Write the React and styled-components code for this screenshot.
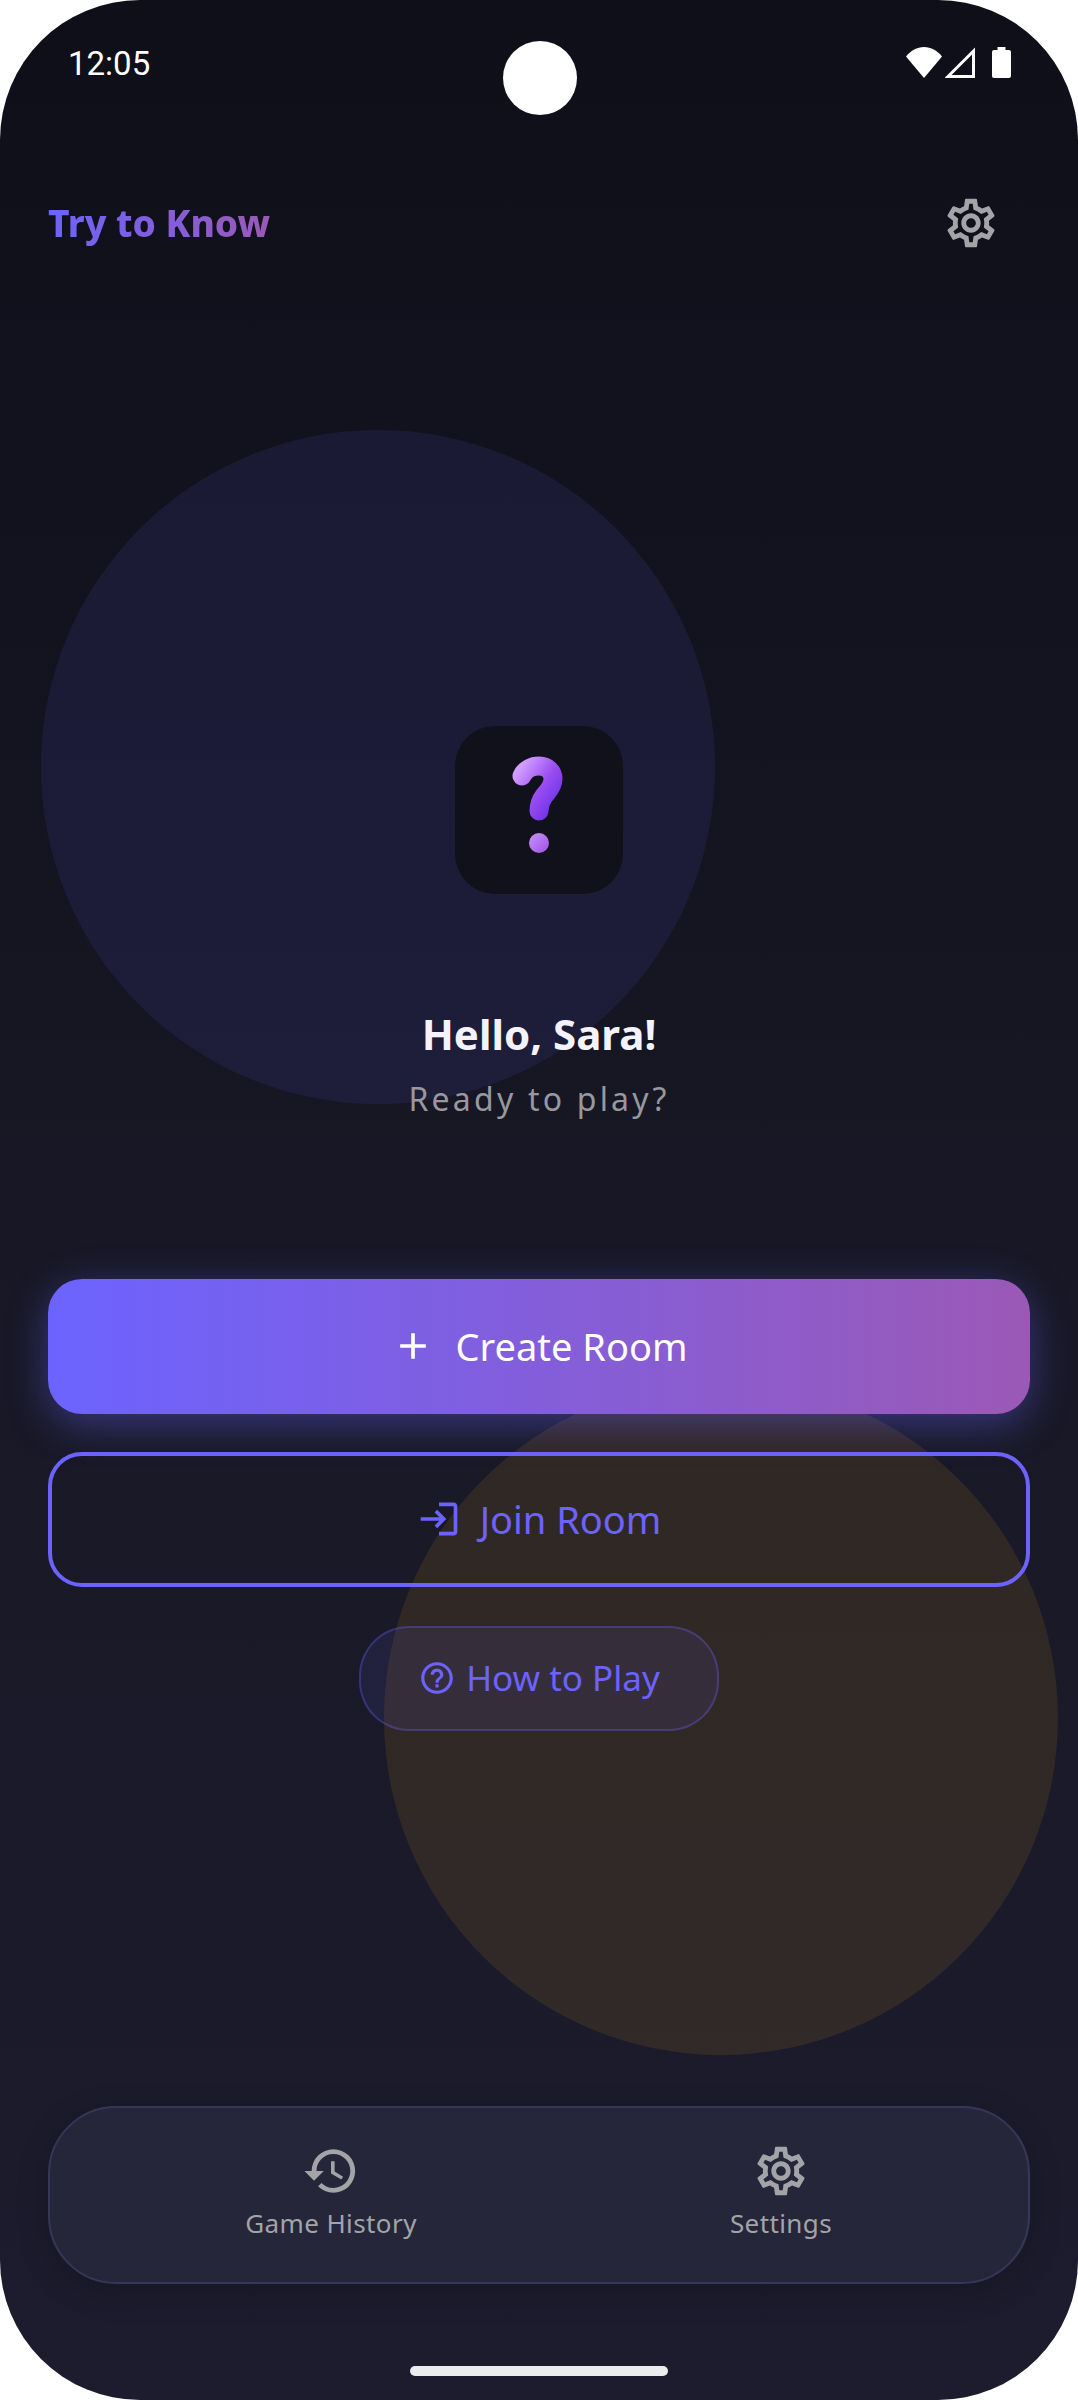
import React from "react";
import styled, { createGlobalStyle } from "styled-components";
import { MdAdd, MdHelpOutline, MdHistory, MdLogin, MdOutlineSettings } from "react-icons/md";

const GlobalStyle = createGlobalStyle`
  html, body {
    margin: 0;
    padding: 0;
    background: #fff;
  }
  * {
    box-sizing: border-box;
  }
`;

const Phone = styled.div`
  position: relative;
  width: 1078px;
  height: 2400px;
  border-radius: 140px;
  overflow: hidden;
  display: flex;
  flex-direction: column;
  background: linear-gradient(180deg, #0f0f1a 0%, #181826 55%, #1c1c2e 100%);
  font-family: "Noto Sans", "Lato", sans-serif;
`;

const Blob = styled.div`
  position: absolute;
  left: ${({ $left }) => $left}px;
  top: ${({ $top }) => $top}px;
  width: 674px;
  height: 674px;
  border-radius: 50%;
  background: ${({ $color }) => $color};
`;

const StatusBar = styled.div`
  position: relative;
  height: 115px;
  padding: 41px 67px 0 68px;
  display: grid;
  grid-template-columns: 1fr auto 1fr;
  align-items: start;
`;

const Clock = styled.span`
  margin-top: 3px;
  font-family: "Roboto", sans-serif;
  font-size: 33px;
  line-height: 40px;
  color: #fff;
`;

const Camera = styled.div`
  width: 74px;
  height: 74px;
  border-radius: 50%;
  background: #fff;
`;

const StatusIcons = styled.div`
  display: flex;
  justify-content: flex-end;
  align-items: flex-start;
  padding-top: 6px;
`;

const SignalSlot = styled.span`
  display: flex;
  margin: 0 17px 0 3px;
`;

const Header = styled.header`
  position: relative;
  height: 64px;
  margin-top: 76px;
  padding: 0 48px;
  display: flex;
  align-items: center;
  justify-content: space-between;
`;

const Brand = styled.h1`
  margin: 0 0 2px;
  font-size: 37px;
  font-weight: 800;
  background: linear-gradient(90deg, #6c63ff, #9b59b6);
  -webkit-background-clip: text;
  background-clip: text;
  color: transparent;
`;

const GearButton = styled.div`
  display: flex;
  color: #a3a3a8;
  margin-right: 30px;
`;

const Hero = styled.section`
  position: relative;
  margin-top: 471px;
  display: flex;
  flex-direction: column;
  align-items: center;
`;

const LogoTile = styled.div`
  width: 168px;
  height: 168px;
  border-radius: 40px;
  background: #11111b;
  display: flex;
  align-items: center;
  justify-content: center;
`;

const Greeting = styled.h2`
  margin: 114px 0 0;
  font-size: 42px;
  line-height: 52px;
  font-weight: 700;
  color: #f4f3fd;
`;

const Subtitle = styled.p`
  margin: 18px 0 0;
  font-size: 32px;
  line-height: 42px;
  letter-spacing: 3.2px;
  color: #98989e;
`;

const Actions = styled.div`
  position: relative;
  margin-top: 159px;
  padding: 0 48px;
  display: flex;
  flex-direction: column;
  align-items: center;
`;

const PrimaryButton = styled.button`
  width: 100%;
  height: 135px;
  padding: 0 0 2px;
  border: none;
  border-radius: 34px;
  background: linear-gradient(90deg, #6c63ff, #9b59b6);
  box-shadow: 0 10px 40px rgba(108, 99, 255, 0.4);
  color: #fff;
  font: inherit;
  font-size: 38px;
  font-weight: 400;
  display: flex;
  align-items: center;
  justify-content: center;
  gap: 21px;
`;

const OutlineButton = styled.button`
  width: 100%;
  height: 135px;
  margin-top: 38px;
  padding: 0 0 2px;
  border: 4px solid #6c63ff;
  border-radius: 34px;
  background: transparent;
  color: #6c63ff;
  font: inherit;
  font-size: 38px;
  font-weight: 400;
  display: flex;
  align-items: center;
  justify-content: center;
  gap: 19px;
`;

const HelpPill = styled.button`
  width: 360px;
  height: 105px;
  margin-top: 39px;
  padding: 0 0 2px;
  border: 2px solid rgba(108, 99, 255, 0.3);
  border-radius: 50px;
  background: rgba(108, 99, 255, 0.1);
  color: #6c63ff;
  font: inherit;
  font-size: 35px;
  display: flex;
  align-items: center;
  justify-content: center;
  gap: 10px;
`;

const BottomNav = styled.nav`
  position: relative;
  margin: 375px 48px 0;
  height: 178px;
  border: 2px solid #363659;
  border-radius: 68px;
  background: #25263a;
  box-shadow: 0 8px 32px rgba(0, 0, 0, 0.2);
  display: grid;
  grid-template-columns: 1fr 1fr;
  padding: 0 22px 0 56px;
`;

const NavItem = styled.div`
  display: flex;
  flex-direction: column;
  align-items: center;
  padding-top: 34px;
  color: #a3a3a8;
  font-size: 26px;
  letter-spacing: 0.4px;
`;

const NavLabel = styled.span`
  margin-top: 6px;
  line-height: 34px;
`;

const HomeBar = styled.div`
  position: relative;
  width: 258px;
  height: 10px;
  margin: 82px auto 0;
  border-radius: 5px;
  background: #ececee;
`;

const QuestionMark = () => (
  <svg width="60" height="110" viewBox="509 756 60 110">
    <defs>
      <linearGradient id="qStroke" x1="0" y1="0" x2="1" y2="1">
        <stop offset="0" stopColor="#d09cff" />
        <stop offset="0.55" stopColor="#9a4cf2" />
        <stop offset="1" stopColor="#6f34e6" />
      </linearGradient>
      <linearGradient id="qDot" x1="0" y1="0" x2="1" y2="1">
        <stop offset="0" stopColor="#c894f8" />
        <stop offset="1" stopColor="#a04fe8" />
      </linearGradient>
    </defs>
    <path
      d="M522 777 C525 770 533 767 539 767 C548 767 553 773 553 780 C553 788 547 793 544 797 C541 801 539 805 539 812"
      fill="none"
      stroke="url(#qStroke)"
      strokeWidth="19"
      strokeLinecap="round"
    />
    <circle cx="539" cy="844" r="10" fill="url(#qDot)" />
  </svg>
);

const WifiIcon = () => (
  <svg width="36" height="31" viewBox="0 0 36 31">
    <path d="M18 31 L0 9.5 C5 3.5 11 0 18 0 C25 0 31 3.5 36 9.5 Z" fill="#fff" />
  </svg>
);

const SignalIcon = () => (
  <svg width="30" height="31" viewBox="0 0 30 31">
    <path d="M3 29.5 L28.5 4 V29.5 Z" fill="none" stroke="#fff" strokeWidth="3" />
  </svg>
);

const BatteryIcon = () => (
  <svg width="19" height="31" viewBox="0 0 19 31">
    <path d="M5.5 0 H13.5 V3 H17 A2 2 0 0 1 19 5 V29 A2 2 0 0 1 17 31 H2 A2 2 0 0 1 0 29 V5 A2 2 0 0 1 2 3 H5.5 Z" fill="#fff" />
  </svg>
);

export default function App() {
  return (
    <Phone>
      <GlobalStyle />
      <Blob $left={41} $top={430} $color="rgba(108, 99, 255, 0.1)" />
      <Blob $left={384} $top={1381} $color="rgba(255, 180, 20, 0.1)" />

      <StatusBar>
        <Clock>12:05</Clock>
        <Camera />
        <StatusIcons>
          <WifiIcon />
          <SignalSlot>
            <SignalIcon />
          </SignalSlot>
          <BatteryIcon />
        </StatusIcons>
      </StatusBar>

      <Header>
        <Brand>Try to Know</Brand>
        <GearButton>
          <MdOutlineSettings size={58} />
        </GearButton>
      </Header>

      <Hero>
        <LogoTile>
          <QuestionMark />
        </LogoTile>
        <Greeting>Hello, Sara!</Greeting>
        <Subtitle>Ready to play?</Subtitle>
      </Hero>

      <Actions>
        <PrimaryButton>
          <MdAdd size={44} />
          Create Room
        </PrimaryButton>
        <OutlineButton>
          <MdLogin size={44} />
          Join Room
        </OutlineButton>
        <HelpPill>
          <MdHelpOutline size={38} />
          How to Play
        </HelpPill>
      </Actions>

      <BottomNav>
        <NavItem>
          <MdHistory size={58} />
          <NavLabel>Game History</NavLabel>
        </NavItem>
        <NavItem>
          <MdOutlineSettings size={58} />
          <NavLabel>Settings</NavLabel>
        </NavItem>
      </BottomNav>

      <HomeBar />
    </Phone>
  );
}
